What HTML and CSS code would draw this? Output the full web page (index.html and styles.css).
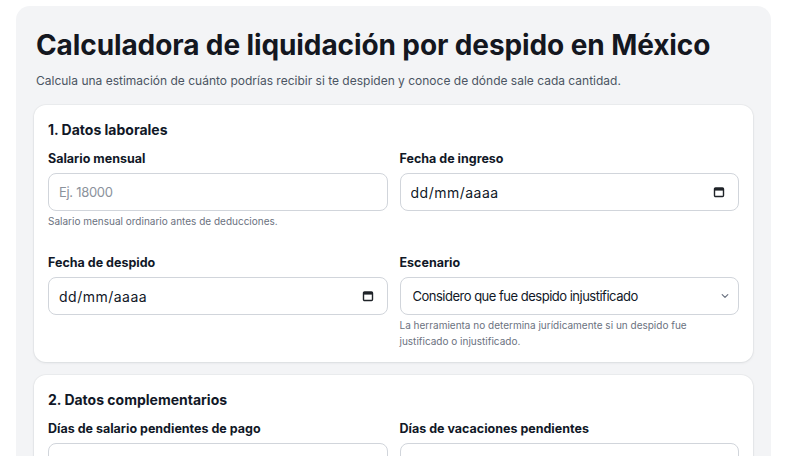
FILE: index.html
```html
<!DOCTYPE html>
<html lang="es">
<head>
<meta charset="utf-8">
<title>Calculadora de liquidación por despido en México</title>
<link rel="stylesheet" href="styles.css">
</head>
<body>
<main class="page">
  <h1 class="title">Calculadora de liquidación por despido en México</h1>
  <p class="subtitle">Calcula una estimación de cuánto podrías recibir si te despiden y conoce de dónde sale cada cantidad.</p>

  <section class="card">
    <h2 class="card-title">1. Datos laborales</h2>
    <div class="grid">
      <div class="field">
        <label class="label" for="salario">Salario mensual</label>
        <div class="control">
          <input class="input" id="salario" type="text" placeholder="Ej. 18000">
        </div>
        <p class="help">Salario mensual ordinario antes de deducciones.</p>
      </div>
      <div class="field">
        <label class="label" for="ingreso">Fecha de ingreso</label>
        <div class="control">
          <input class="input date" id="ingreso" type="text" placeholder="dd/mm/aaaa">
          <svg class="cal" width="12" height="12" viewBox="0 0 12 12" aria-hidden="true"><rect x="1.5" y="2" width="9" height="8.5" rx="1" fill="none" stroke="#1f2328" stroke-width="1.4"/><rect x="1.5" y="2" width="9" height="2.6" fill="#1f2328"/></svg>
        </div>
      </div>
      <div class="field">
        <label class="label" for="despido">Fecha de despido</label>
        <div class="control">
          <input class="input date" id="despido" type="text" placeholder="dd/mm/aaaa">
          <svg class="cal" width="12" height="12" viewBox="0 0 12 12" aria-hidden="true"><rect x="1.5" y="2" width="9" height="8.5" rx="1" fill="none" stroke="#1f2328" stroke-width="1.4"/><rect x="1.5" y="2" width="9" height="2.6" fill="#1f2328"/></svg>
        </div>
      </div>
      <div class="field">
        <label class="label" for="escenario">Escenario</label>
        <div class="control select-control">
          <select class="select" id="escenario">
            <option>Considero que fue despido injustificado</option>
            <option>Considero que fue despido justificado</option>
            <option>Renuncia voluntaria</option>
          </select>
          <svg class="chev" width="8" height="6" viewBox="0 0 8 6" aria-hidden="true"><path d="M1.2 1.6 L4 4.4 L6.8 1.6" fill="none" stroke="#6b7280" stroke-width="1.2" stroke-linecap="round" stroke-linejoin="round"/></svg>
        </div>
        <p class="help">La herramienta no determina jurídicamente si un despido fue justificado o injustificado.</p>
      </div>
    </div>
  </section>

  <section class="card">
    <h2 class="card-title">2. Datos complementarios</h2>
    <div class="grid">
      <div class="field">
        <label class="label" for="pendientes">Días de salario pendientes de pago</label>
        <div class="control">
          <input class="input" id="pendientes" type="text" placeholder="Ej. 0">
        </div>
      </div>
      <div class="field">
        <label class="label" for="vacaciones">Días de vacaciones pendientes</label>
        <div class="control">
          <input class="input" id="vacaciones" type="text" placeholder="Ej. 0">
        </div>
      </div>
    </div>
  </section>
</main>
</body>
</html>
```

FILE: styles.css
```css
* { box-sizing: border-box; }

body {
  margin: 0;
  background: #ffffff;
  font-family: Inter, "Noto Sans", "Liberation Sans", sans-serif;
  color: #111827;
}

.page {
  margin: 6px 0 0 16px;
  width: 755px;
  background: #f3f4f6;
  border-radius: 14px;
  padding: 22px 18px 18px;
}

.title {
  margin: 0;
  font-size: 28px;
  line-height: 34px;
  font-weight: 700;
  letter-spacing: -0.1px;
  color: #14171f;
  padding-left: 2px;
}

.subtitle {
  margin: 9px 0 14px;
  padding-left: 2px;
  font-size: 12px;
  line-height: 20px;
  color: #4b5563;
}

.card {
  background: #ffffff;
  border-radius: 12px;
  box-shadow: 0 1px 3px rgba(15, 23, 42, 0.08), 0 0 0 1px rgba(15, 23, 42, 0.03);
  padding: 15px 14px 13px;
  margin-bottom: 13px;
}

.card-title {
  margin: 0 0 10px;
  font-size: 14px;
  line-height: 20px;
  font-weight: 700;
  color: #111827;
}

.grid {
  display: grid;
  grid-template-columns: 1fr 1fr;
  column-gap: 12px;
  row-gap: 25px;
}

.label {
  display: block;
  font-size: 12.5px;
  line-height: 18px;
  font-weight: 700;
  color: #111827;
  margin-bottom: 5px;
}

.control {
  height: 38px;
  border: 1px solid #d1d5db;
  border-radius: 8px;
  background: #ffffff;
  display: flex;
  align-items: center;
  padding: 0 13px 0 10px;
}

.input,
.select {
  flex: 1;
  min-width: 0;
  border: none;
  outline: none;
  background: transparent;
  font-family: inherit;
  color: #111827;
  padding: 0;
}

.input {
  font-size: 13px;
  letter-spacing: -0.3px;
}

.input::placeholder { color: #8b929c; }

.input.date {
  font-size: 14px;
  letter-spacing: 0.5px;
}

.input.date::placeholder { color: #111827; }

.select {
  appearance: none;
  -webkit-appearance: none;
  padding-left: 2px;
  font-size: 13px;
  letter-spacing: -0.5px;
}

.select-control { padding-right: 9px; }

.cal { flex: none; }
.chev { flex: none; }

.help {
  margin: 2px 0 0;
  max-width: 320px;
  font-size: 10px;
  line-height: 16px;
  color: #6b7280;
}
```
